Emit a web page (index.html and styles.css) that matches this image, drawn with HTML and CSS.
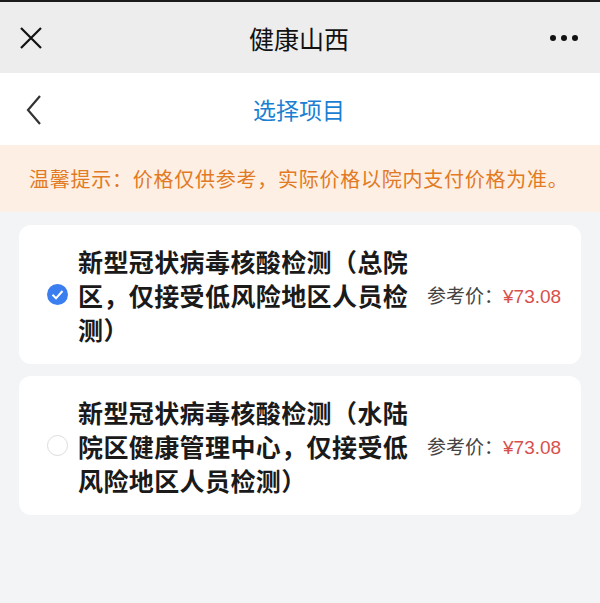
FILE: index.html
```html
<!DOCTYPE html>
<html lang="zh-CN">

<head>
    <meta charset="UTF-8">
    <meta name="viewport" content="width=device-width, initial-scale=1.0">
    <title>健康山西</title>
    <link rel="stylesheet" href="styles.css">
</head>

<body>
    <div class="topbar">
        <svg class="close" width="22" height="22" viewBox="0 0 22 22">
            <path d="M1 1 L21 21 M21 1 L1 21" stroke="#111" stroke-width="2.2" fill="none" />
        </svg>
        <div class="topbar-title">健康山西</div>
        <div class="more"><span></span><span></span><span></span></div>
    </div>

    <div class="navbar">
        <svg class="back" width="16" height="30" viewBox="0 0 16 30">
            <path d="M14 1 L2 15 L14 29" stroke="#333" stroke-width="2.2" fill="none" />
        </svg>
        <div class="navbar-title">选择项目</div>
    </div>

    <div class="notice">温馨提示：价格仅供参考，实际价格以院内支付价格为准。</div>

    <div class="list">
        <div class="card">
            <span class="radio checked">
                <svg width="21" height="21" viewBox="0 0 21 21">
                    <circle cx="10.5" cy="10.5" r="10.5" fill="#3a7ef0" />
                    <path d="M5.5 10.8 L9 14.3 L15.5 7" stroke="#fff" stroke-width="2" fill="none" />
                </svg>
            </span>
            <div class="name">新型冠状病毒核酸检测（总院区，仅接受低风险地区人员检测）</div>
            <div class="price"><span class="price-label">参考价：</span><span class="price-value">¥73.08</span></div>
        </div>
        <div class="card">
            <span class="radio"></span>
            <div class="name">新型冠状病毒核酸检测（水陆院区健康管理中心，仅接受低风险地区人员检测）</div>
            <div class="price"><span class="price-label">参考价：</span><span class="price-value">¥73.08</span></div>
        </div>
    </div>
</body>

</html>
```

FILE: styles.css
```css
body {
    margin: 0;
    font-family: "Noto Sans CJK SC", "Noto Sans", sans-serif;
    background-color: #f3f4f6;
    width: 600px;
    height: 603px;
    overflow: hidden;
}

.topbar {
    height: 71px;
    border-top: 2px solid #1c1c1c;
    background-color: #ededed;
    display: flex;
    align-items: center;
    justify-content: space-between;
    padding: 0 22px 0 20px;
}

.close {
    display: block;
}

.topbar-title {
    font-size: 25px;
    color: #111;
    margin-left: 6px;
}

.more {
    display: flex;
    gap: 5px;
}

.more span {
    width: 6px;
    height: 6px;
    border-radius: 50%;
    background-color: #111;
}

.navbar {
    height: 72px;
    background-color: #fff;
    display: flex;
    align-items: center;
    justify-content: center;
    position: relative;
}

.back {
    position: absolute;
    left: 26px;
    top: 22px;
}

.navbar-title {
    font-size: 23px;
    color: #1a7fd2;
    margin-left: -2px;
}

.notice {
    height: 67px;
    background-color: #fdefe4;
    color: #e27a23;
    font-size: 20px;
    letter-spacing: 0.75px;
    display: flex;
    align-items: center;
    padding-left: 29px;
    box-sizing: border-box;
}

.list {
    padding: 13px 19px;
    display: flex;
    flex-direction: column;
    gap: 12px;
}

.card {
    background-color: #fff;
    border-radius: 12px;
    height: 139px;
    display: flex;
    align-items: center;
    padding-left: 28px;
    box-sizing: border-box;
}

.radio {
    width: 21px;
    height: 21px;
    flex-shrink: 0;
    box-sizing: border-box;
    border: 1.5px solid #dcdcdc;
    border-radius: 50%;
}

.radio.checked {
    border: none;
}

.radio svg {
    display: block;
}

.name {
    width: 335px;
    margin-left: 10px;
    font-size: 25px;
    letter-spacing: 0.4px;
    font-weight: 700;
    line-height: 34px;
    color: #1a1a1a;
}

.price {
    margin-left: 14px;
    white-space: nowrap;
    font-size: 19px;
}

.price-label {
    color: #444;
}

.price-value {
    color: #d8504d;
    font-family: "Liberation Sans", sans-serif;
}
```
